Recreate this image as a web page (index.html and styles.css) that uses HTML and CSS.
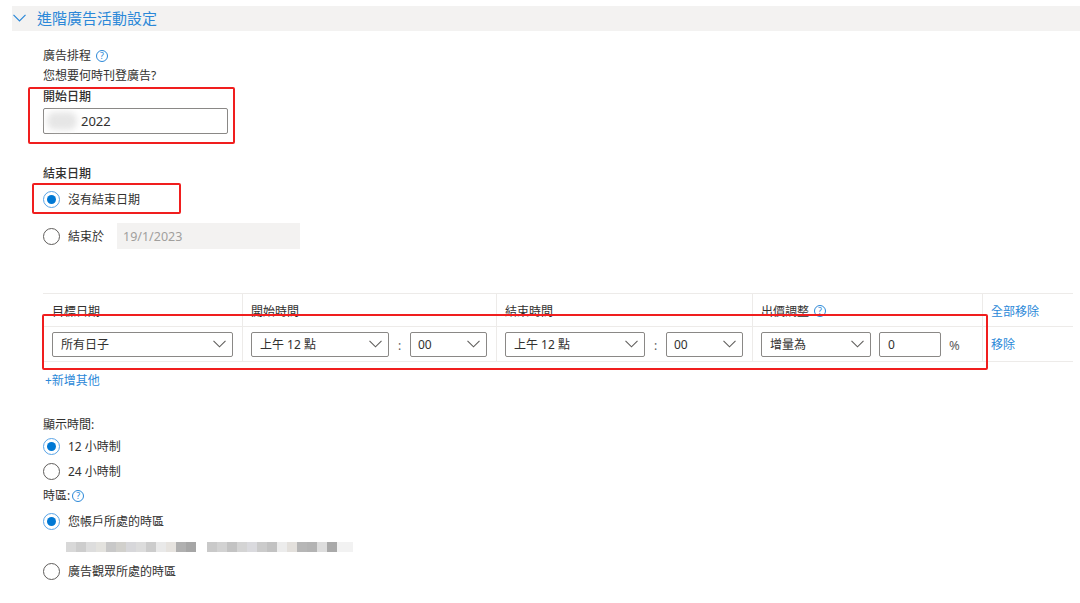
FILE: index.html
```html
<!DOCTYPE html>
<html lang="zh-Hant">
<head>
<meta charset="utf-8">
<title>進階廣告活動設定</title>
<link rel="stylesheet" href="styles.css">
</head>
<body>
<div class="page">
  <div class="band">
    <svg class="band-chev" width="13" height="8" viewBox="0 0 13 8"><polyline points="0.5,0.8 6.5,6.8 12.5,0.8"/></svg>
    <span class="band-title">進階廣告活動設定</span>
  </div>

  <div class="content">
    <div class="label l-sched">廣告排程<span class="help">?</span></div>
    <div class="label">您想要何時刊登廣告?</div>
    <div class="label strong l-start">開始日期</div>
    <div class="textbox start-box"><span class="smudge"></span>2022</div>

    <div class="label strong l-end">結束日期</div>
    <div class="radio-row r-noend"><span class="radio checked"></span>沒有結束日期</div>
    <div class="radio-row r-endon"><span class="radio"></span>結束於<div class="textbox disabled">19/1/2023</div></div>

    <div class="sched-table">
      <div class="th">目標日期</div>
      <div class="th sep">開始時間</div>
      <div class="th sep">結束時間</div>
      <div class="th sep">出價調整<span class="help">?</span></div>
      <div class="th sep link">全部移除</div>

      <div class="td">
        <div class="select w-day"><span>所有日子</span><svg class="dd" width="13" height="8" viewBox="0 0 13 8"><polyline points="0.5,0.8 6.5,6.8 12.5,0.8"/></svg></div>
      </div>
      <div class="td sep">
        <div class="select w-hour"><span>上午 12 點</span><svg class="dd" width="13" height="8" viewBox="0 0 13 8"><polyline points="0.5,0.8 6.5,6.8 12.5,0.8"/></svg></div>
        <span class="colon">:</span>
        <div class="select w-min"><span>00</span><svg class="dd" width="13" height="8" viewBox="0 0 13 8"><polyline points="0.5,0.8 6.5,6.8 12.5,0.8"/></svg></div>
      </div>
      <div class="td sep">
        <div class="select w-hour2"><span>上午 12 點</span><svg class="dd" width="13" height="8" viewBox="0 0 13 8"><polyline points="0.5,0.8 6.5,6.8 12.5,0.8"/></svg></div>
        <span class="colon">:</span>
        <div class="select w-min"><span>00</span><svg class="dd" width="13" height="8" viewBox="0 0 13 8"><polyline points="0.5,0.8 6.5,6.8 12.5,0.8"/></svg></div>
      </div>
      <div class="td sep">
        <div class="select w-bid"><span>增量為</span><svg class="dd" width="13" height="8" viewBox="0 0 13 8"><polyline points="0.5,0.8 6.5,6.8 12.5,0.8"/></svg></div>
        <div class="numbox">0</div>
        <span class="pct">%</span>
      </div>
      <div class="td sep link">移除</div>
    </div>

    <div class="add-more">+新增其他</div>

    <div class="label l-display">顯示時間:</div>
    <div class="radio-row small"><span class="radio checked"></span>12 小時制</div>
    <div class="radio-row small gap3"><span class="radio"></span>24 小時制</div>

    <div class="label l-tz">時區:<span class="help">?</span></div>
    <div class="radio-row small gap4"><span class="radio checked"></span>您帳戶所處的時區</div>
    <div class="blurred"></div>
    <div class="radio-row small gap8"><span class="radio"></span>廣告觀眾所處的時區</div>
  </div>

  <div class="mark mark-start"></div>
  <div class="mark mark-noend"></div>
  <div class="mark mark-row"></div>
</div>
</body>
</html>
```

FILE: styles.css
```css
html, body {
  margin: 0;
  padding: 0;
  background: #ffffff;
}

body {
  font-family: "Noto Sans", "Noto Sans CJK TC", sans-serif;
  font-size: 12px;
  color: #323130;
}

.page {
  position: relative;
  width: 1080px;
  height: 603px;
  padding-top: 6px;
  box-sizing: border-box;
  overflow: hidden;
}

/* header band */
.band {
  margin-left: 12px;
  height: 25px;
  background: #f3f2f1;
  display: flex;
  align-items: center;
}

.band-chev {
  margin-left: 1px;
  margin-top: -1px;
  fill: none;
  stroke: #2b88d8;
  stroke-width: 1.2;
}

.band-title {
  margin-left: 11px;
  font-size: 15px;
  line-height: 20px;
  color: #2b88d8;
  margin-top: -2px;
}

.content {
  padding-left: 43px;
}

.label {
  line-height: 20px;
  height: 20px;
  display: flex;
  align-items: center;
}

.strong {
  font-weight: 500;
}

.l-sched { margin-top: 15px; }
.l-start { margin-top: 1px; }
.l-end { margin-top: 30px; }
.l-display { margin-top: 24px; }
.l-tz { margin-top: 4px; }

.help {
  width: 12px;
  height: 12px;
  box-sizing: border-box;
  border: 1px solid #2b88d8;
  border-radius: 50%;
  color: #2b88d8;
  font-size: 9px;
  line-height: 10px;
  text-align: center;
  margin-left: 5px;
  font-family: "Noto Sans", sans-serif;
}

.l-tz .help { margin-left: 2px; }

.textbox {
  box-sizing: border-box;
  height: 26px;
  display: flex;
  align-items: center;
}

.start-box {
  margin-top: 1px;
  width: 185px;
  border: 1px solid #8a8886;
  border-radius: 2px;
  padding-left: 3px;
  font-size: 13px;
}

.smudge {
  width: 30px;
  height: 18px;
  background: #e6e6e6;
  border-radius: 8px;
  filter: blur(3px);
  margin-right: 4px;
}

.disabled {
  width: 183px;
  margin-left: 13px;
  background: #f3f2f1;
  color: #a19f9d;
  padding-left: 6px;
  font-size: 12.5px;
}

/* radios */
.radio-row {
  display: flex;
  align-items: center;
  height: 24px;
}

.r-noend { margin-top: 3px; }
.r-endon { margin-top: 12px; height: 26px; }

.radio-row.small { height: 22px; }
.gap3 { margin-top: 3px; }
.gap4 { margin-top: 4px; }
.gap8 { margin-top: 8px; }

.radio {
  flex: none;
  width: 17px;
  height: 17px;
  box-sizing: border-box;
  border: 1px solid #605e5c;
  border-radius: 50%;
  margin-right: 8px;
  display: flex;
  align-items: center;
  justify-content: center;
}

.radio.checked {
  border-color: #5aa4e6;
}

.radio.checked::after {
  content: "";
  width: 9px;
  height: 9px;
  border-radius: 50%;
  background: #0078d4;
}

/* schedule table */
.sched-table {
  margin-top: 44px;
  width: 1030px;
  display: grid;
  grid-template-columns: 199px 254px 256px 230px 91px;
  border-top: 1px solid #edebe9;
}

.th, .td {
  box-sizing: border-box;
  border-bottom: 1px solid #edebe9;
  display: flex;
  align-items: center;
  padding-left: 9px;
}

.th {
  height: 33px;
  padding-top: 1px;
}

.td {
  height: 35px;
}

.sep {
  border-left: 1px solid #edebe9;
  padding-left: 8px;
}

.link {
  color: #2b88d8;
}

.select {
  box-sizing: border-box;
  height: 25px;
  border: 1px solid #8a8886;
  border-radius: 2px;
  display: flex;
  align-items: center;
  justify-content: space-between;
  padding: 0 6px 0 8px;
}

.dd {
  fill: none;
  stroke: #605e5c;
  stroke-width: 1.1;
}

.w-day { width: 181px; }
.w-hour { width: 138px; }
.w-hour2 { width: 140px; }
.w-min { width: 77px; padding-left: 7px; }
.w-bid { width: 110px; }

.colon {
  width: 21px;
  text-align: center;
  color: #605e5c;
  margin-top: 2px;
}

.numbox {
  box-sizing: border-box;
  width: 62px;
  height: 25px;
  border: 1px solid #8a8886;
  border-radius: 2px;
  margin-left: 8px;
  padding-left: 8px;
  display: flex;
  align-items: center;
}

.pct {
  margin-left: 8px;
  color: #605e5c;
  margin-top: 2px;
  font-size: 13px;
}

.add-more {
  margin-top: 9px;
  margin-left: 2px;
  line-height: 20px;
  color: #2b88d8;
}

.blurred {
  margin-top: 10px;
  margin-left: 23px;
  width: 287px;
  height: 10px;
  background: linear-gradient(90deg,
    #d8d8d8 0 10px, #cdcdcd 10px 20px, #dddddd 20px 30px, #e3e2de 30px 40px,
    #c8c8c8 40px 50px, #d1d0cc 50px 60px, #d7d7da 60px 70px, #dcdcdc 70px 80px,
    #cccccc 80px 90px, #e9e9e9 90px 100px, #e6e3df 100px 110px, #b0b0b0 110px 120px,
    #a6a6a6 120px 130px, #ffffff 130px 141px, #c9c9c9 141px 151px, #d2d2d2 151px 161px,
    #c3c3c3 161px 171px, #d4d4d4 171px 181px, #dadade 181px 191px, #cbcbcb 191px 201px,
    #c2c2c2 201px 211px, #ececec 211px 221px, #e3e0dc 221px 231px, #b6b6b6 231px 241px,
    #b3b3b3 241px 251px, #dddddd 251px 261px, #a9a9a9 261px 271px, #f2f2f2 271px 287px);
}

/* red annotation boxes */
.mark {
  position: absolute;
  box-sizing: border-box;
  border: 2px solid #f01e1e;
  border-radius: 2px;
}

.mark-start { left: 28px; top: 87px; width: 207px; height: 57px; }
.mark-noend { left: 32px; top: 183px; width: 149px; height: 31px; }
.mark-row { left: 42px; top: 314px; width: 946px; height: 56px; }
```
